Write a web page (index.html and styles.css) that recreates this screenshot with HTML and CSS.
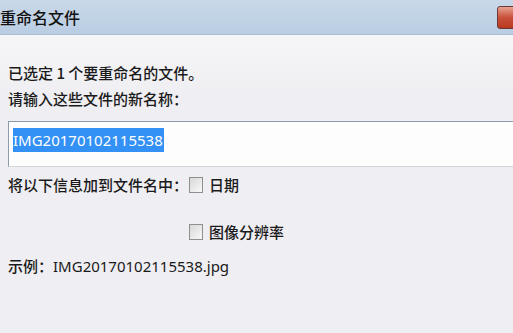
FILE: index.html
```html
<!DOCTYPE html>
<html lang="zh-CN">
<head>
    <meta charset="UTF-8">
    <title>重命名文件</title>
    <link rel="stylesheet" href="styles.css">
</head>
<body>
    <div class="dialog">
        <div class="titlebar">
            <span class="title">重命名文件</span>
            <span class="close-btn"></span>
        </div>
        <div class="content">
            <p class="line">已选定 1 个要重命名的文件。</p>
            <p class="line">请输入这些文件的新名称：</p>
            <div class="name-box">
                <span class="selected">IMG20170102115538</span>
            </div>
            <div class="options">
                <span class="options-label">将以下信息加到文件名中：</span>
                <div class="checks">
                    <label class="check"><span class="box"></span>日期</label>
                    <label class="check"><span class="box"></span>图像分辨率</label>
                </div>
            </div>
            <p class="line example">示例：<span class="latin">IMG20170102115538.jpg</span></p>
        </div>
    </div>
</body>
</html>
```

FILE: styles.css
```css
/* Grundlayout */
html, body {
    margin: 0;
    padding: 0;
    height: 100%;
    overflow: hidden;
    font-family: "Noto Sans CJK SC", "Noto Sans", sans-serif;
    font-weight: 500;
    color: #1a1a1a;
    background-color: #efeef2;
}

.dialog {
    display: flex;
    flex-direction: column;
    height: 100%;
}

/* Titelleiste */
.titlebar {
    display: flex;
    align-items: center;
    justify-content: space-between;
    height: 34px;
    background: linear-gradient(#c9d8e8, #b9cde3);
    border-bottom: 1px solid #a9bdd4;
}
.title {
    font-size: 16px;
    margin-left: 0;
    color: #111;
}
.close-btn {
    width: 20px;
    height: 21px;
    margin-right: -6px;
    border: 1px solid #6b3a36;
    border-radius: 3px;
    background: linear-gradient(#e8a291, #c9503a 50%, #b8391f);
}

/* Inhalt */
.content {
    flex: 1;
    padding: 25px 0 0 8px;
    background: linear-gradient(#f6f5f7, #efeef2 60px);
}
.line {
    margin: 0;
    font-size: 15px;
    line-height: 26px;
}

.name-box {
    margin: 9px -10px 0 0;
    height: 46px;
    border: 1px solid #8d9cab;
    border-bottom-color: #d4d6da;
    border-right: none;
    background-color: #fdfdfd;
    padding: 5px 0 0 4px;
    box-sizing: border-box;
}
.selected {
    display: inline-block;
    background-color: #3390f4;
    color: #fff;
    font-family: "Noto Sans", sans-serif;
    font-weight: 400;
    font-size: 15px;
    line-height: 24px;
    padding-right: 1px;
}

.options {
    display: flex;
    margin-top: 5px;
}
.options-label {
    font-size: 15px;
    line-height: 26px;
}
.checks {
    display: flex;
    flex-direction: column;
    gap: 21px;
    margin-left: 1px;
}
.check {
    display: flex;
    align-items: center;
    font-size: 15px;
    line-height: 26px;
}
.box {
    width: 12px;
    height: 14px;
    margin-right: 6px;
    border: 1px solid #8f8f8f;
    background: linear-gradient(135deg, #d8d8d8, #f8f8f8);
}
.example {
    margin-top: 8px;
}
.latin {
    font-family: "Noto Sans", sans-serif;
    font-weight: 400;
    font-size: 15px;
}
```
